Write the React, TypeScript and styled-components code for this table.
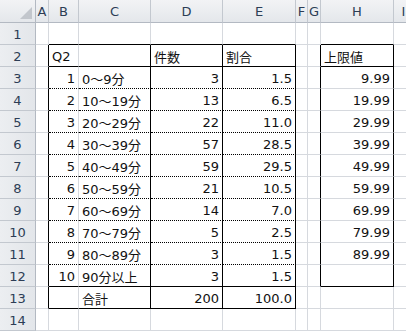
import React from "react";
import styled, { createGlobalStyle, css } from "styled-components";

const GlobalStyle = createGlobalStyle`
  html, body {
    margin: 0;
    padding: 0;
    background: #ffffff;
    overflow: hidden;
  }
`;

type Edge = "grid" | "solid" | "dot" | "none";
type Align = "left" | "right" | "center";

const GRID = "#d6d9de";
const INK = "#000000";

const edge = (e: Edge) => {
  switch (e) {
    case "solid":
      return `1px solid ${INK}`;
    case "dot":
      return `1px dotted ${INK}`;
    case "none":
      return "1px solid transparent";
    default:
      return `1px solid ${GRID}`;
  }
};

const Sheet = styled.div`
  display: grid;
  grid-template-columns: 36px 13px 30px 72px 72px 73px 12px 13px 73px 20px;
  grid-template-rows: 23px repeat(14, 22px);
  width: 406px;
  height: 332px;
  overflow: hidden;
  background: #ffffff;
  font-family: "DejaVu Sans", "Noto Sans CJK JP", sans-serif;
`;

const headerFill = css`
  background: linear-gradient(#f2f3f5 0%, #e4e7eb 100%);
  color: #2c3d55;
  font-family: "DejaVu Sans", sans-serif;
  font-size: 13px;
  display: flex;
  align-items: center;
  justify-content: center;
  box-sizing: border-box;
`;

const Corner = styled.div`
  ${headerFill};
  position: relative;
  border-right: 1px solid #b3b9c2;
  border-bottom: 1px solid #b3b9c2;
`;

/* the grey select-all triangle in the corner */
const CornerMark = styled.span`
  position: absolute;
  right: 3px;
  bottom: 3px;
  width: 0;
  height: 0;
  border-left: 12px solid transparent;
  border-bottom: 12px solid #c2c6cc;
`;

const ColHead = styled.div`
  ${headerFill};
  border-right: 1px solid #c3c8cf;
  border-bottom: 1px solid #b3b9c2;
  padding-top: 1px;
`;

const RowHead = styled.div`
  ${headerFill};
  background: linear-gradient(90deg, #eceef1 0%, #e3e6ea 100%);
  border-right: 1px solid #b3b9c2;
  border-bottom: 1px solid #c3c8cf;
  padding-top: 2px;
`;

const Cell = styled.div<{ $r: Edge; $b: Edge; $align: Align }>`
  box-sizing: border-box;
  display: flex;
  align-items: center;
  justify-content: ${(p) =>
    p.$align === "right" ? "flex-end" : p.$align === "center" ? "center" : "flex-start"};
  padding: 2px 3px 0 3px;
  border-right: ${(p) => edge(p.$r)};
  border-bottom: ${(p) => edge(p.$b)};
  font-size: 13px;
  color: #111111;
  white-space: nowrap;
  overflow: visible;
`;

const COLS = ["A", "B", "C", "D", "E", "F", "G", "H", "I"];

const bands: [number, string, number, string, string][] = [
  [1, "0～9分", 3, "1.5", "9.99"],
  [2, "10～19分", 13, "6.5", "19.99"],
  [3, "20～29分", 22, "11.0", "29.99"],
  [4, "30～39分", 57, "28.5", "39.99"],
  [5, "40～49分", 59, "29.5", "49.99"],
  [6, "50～59分", 21, "10.5", "59.99"],
  [7, "60～69分", 14, "7.0", "69.99"],
  [8, "70～79分", 5, "2.5", "79.99"],
  [9, "80～89分", 3, "1.5", "89.99"],
  [10, "90分以上", 3, "1.5", ""],
];

type CellSpec = { text: string; align: Align };

function content(row: number, col: number): CellSpec {
  const blank: CellSpec = { text: "", align: "left" };
  if (row === 2) {
    if (col === 1) return { text: "Q2", align: "left" };
    if (col === 3) return { text: "件数", align: "left" };
    if (col === 4) return { text: "割合", align: "left" };
    if (col === 7) return { text: "上限値", align: "left" };
    return blank;
  }
  if (row >= 3 && row <= 12) {
    const [n, label, count, pct, upper] = bands[row - 3];
    if (col === 1) return { text: String(n), align: "right" };
    if (col === 2) return { text: label, align: "left" };
    if (col === 3) return { text: String(count), align: "right" };
    if (col === 4) return { text: pct, align: "right" };
    if (col === 7) return { text: upper, align: "right" };
    return blank;
  }
  if (row === 13) {
    if (col === 2) return { text: "合計", align: "left" };
    if (col === 3) return { text: "200", align: "right" };
    if (col === 4) return { text: "100.0", align: "right" };
  }
  return blank;
}

// right edge of a cell: the framed tables are B2:E13 and H2:H12
function rightEdge(row: number, col: number): Edge {
  const inMain = row >= 2 && row <= 13;
  const inLimit = row >= 2 && row <= 12;
  if (inMain && (col === 0 || col === 2 || col === 3 || col === 4)) return "solid";
  if (inLimit && (col === 6 || col === 7)) return "solid";
  return "grid";
}

// bottom edge of a cell
function bottomEdge(row: number, col: number): Edge {
  const mainCol = col >= 1 && col <= 4;
  if (mainCol) {
    if (row === 1 || row === 2 || row === 12 || row === 13) return "solid";
    if (row >= 3 && row <= 11) return "dot";
  }
  if (col === 7 && (row === 1 || row === 2 || row === 12)) return "solid";
  return "grid";
}

export default function App() {
  const rows = Array.from({ length: 14 }, (_, i) => i + 1);
  return (
    <>
      <GlobalStyle />
      <Sheet>
        <Corner>
          <CornerMark />
        </Corner>
        {COLS.map((c) => (
          <ColHead key={c}>{c}</ColHead>
        ))}
        {rows.map((r) => (
          <React.Fragment key={r}>
            <RowHead>{r}</RowHead>
            {COLS.map((_, c) => {
              const spec = content(r, c);
              return (
                <Cell key={c} $r={rightEdge(r, c)} $b={bottomEdge(r, c)} $align={spec.align}>
                  {spec.text}
                </Cell>
              );
            })}
          </React.Fragment>
        ))}
      </Sheet>
    </>
  );
}
